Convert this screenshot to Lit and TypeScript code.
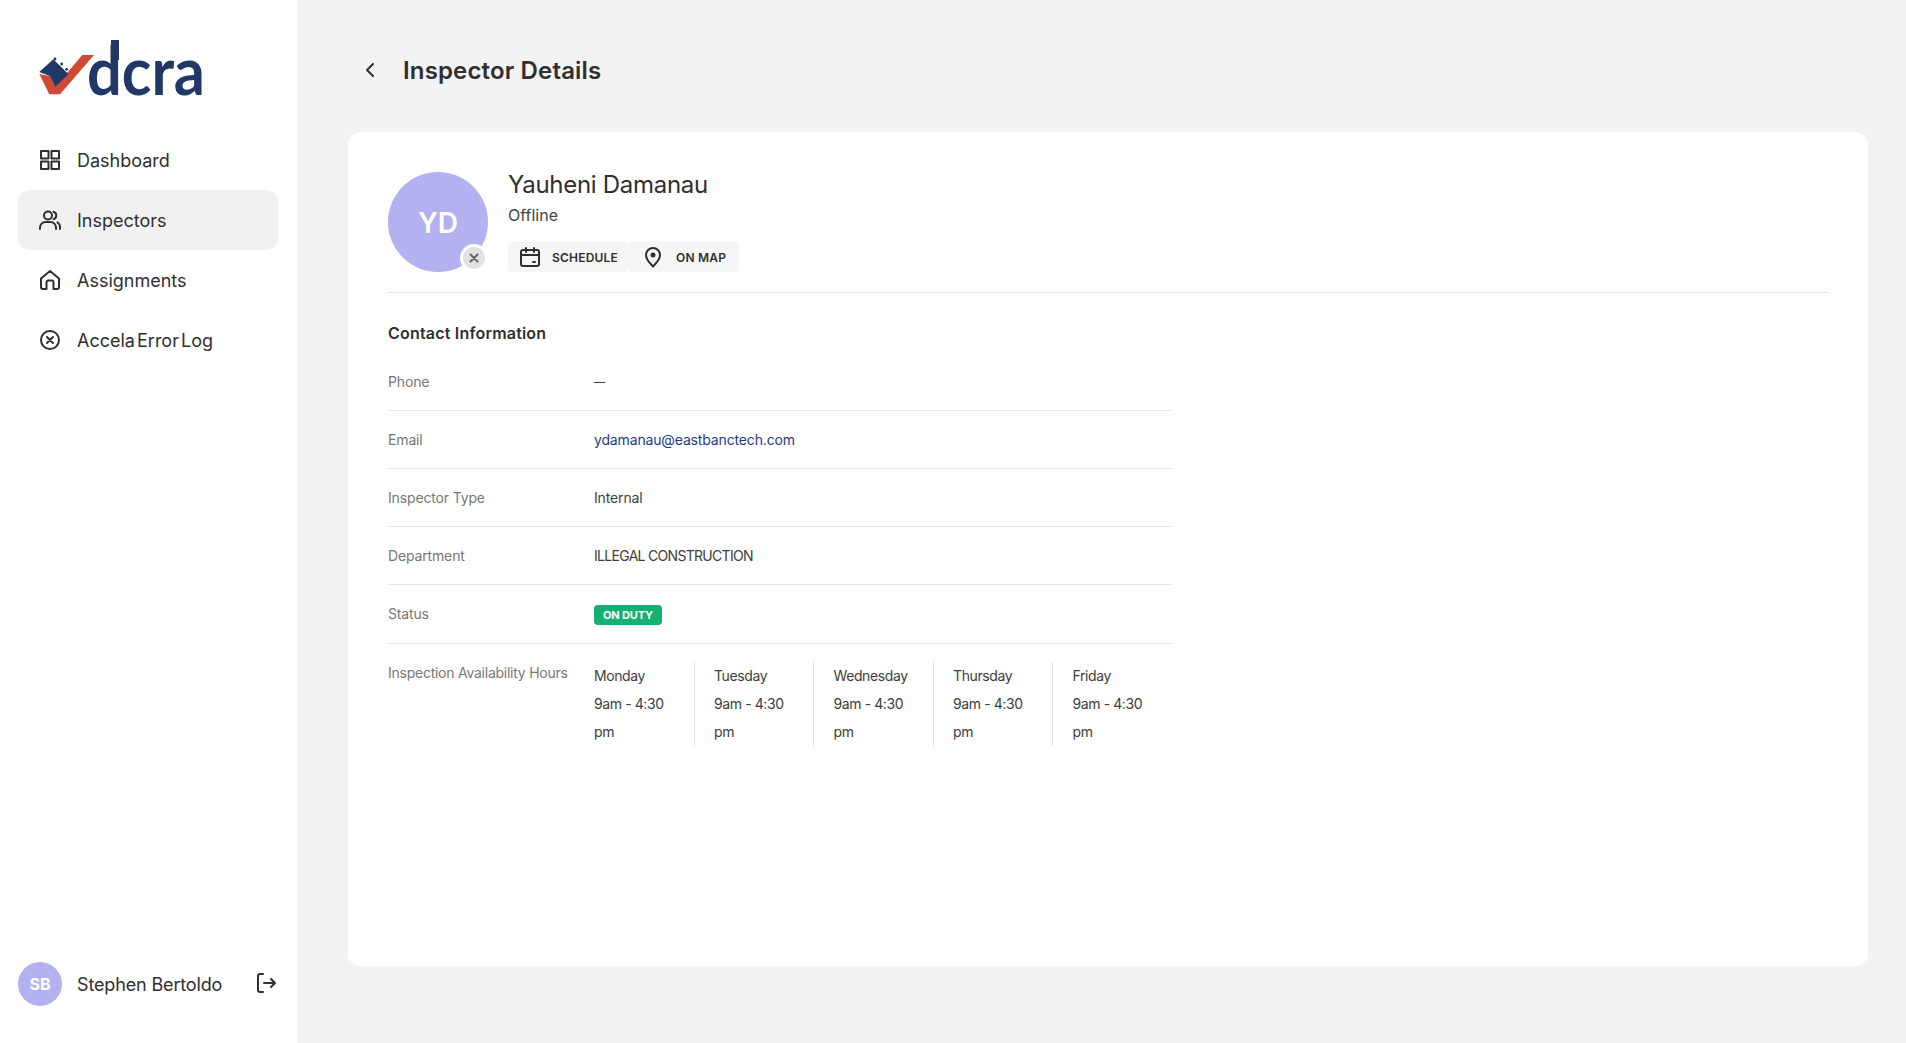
import { LitElement, html, css, svg } from 'lit';
import { customElement } from 'lit/decorators.js';

const icon = (body: unknown, size = 24, vb = 24) => html`<svg class="ic" width=${size} height=${size} viewBox="0 0 ${vb} ${vb}" fill="none" stroke="#2f2f2f" stroke-width="2" stroke-linecap="round" stroke-linejoin="round">${body}</svg>`;

const icons = {
  grid: svg`<rect x="3" y="3" width="7.5" height="7.5"/><rect x="13.5" y="3" width="7.5" height="7.5"/><rect x="3" y="13.5" width="7.5" height="7.5"/><rect x="13.5" y="13.5" width="7.5" height="7.5"/>`,
  users: svg`<circle cx="10" cy="7.5" r="4"/><path d="M2 21v-1.5A5.5 5.5 0 0 1 7.500 14h5a5.500 5.500 0 0 1 5.500 5.500V21"/><path d="M15.500 3.700a4 4 0 0 1 0 7.600"/><path d="M19.500 14.400A5.500 5.500 0 0 1 22 19v2"/>`,
  home: svg`<path d="M3 10.500 12 3l9 7.500V19a2 2 0 0 1-2 2h-3.500v-6.500a2 2 0 0 0-2-2h-3a2 2 0 0 0-2 2V21H5a2 2 0 0 1-2-2z"/>`,
  xcircle: svg`<circle cx="12" cy="12" r="9"/><path d="m9 9 6 6M15 9l-6 6"/>`,
  calendar: svg`<rect x="3" y="5" width="18" height="16" rx="2"/><path d="M8 3v4M16 3v4M3 10h18M15 17h2"/>`,
  pin: svg`<path d="M12 21.500c-1.500-1.600-7-6.500-7-11.500a7 7 0 0 1 14 0c0 5-5.500 9.900-7 11.500z"/><circle cx="12" cy="10" r="1.500" fill="#2f2f2f"/>`,
  logout: svg`<path d="M9 3H6a2 2 0 0 0-2 2v14a2 2 0 0 0 2 2h3"/><path d="M10 12h11M17 8l4 4-4 4"/>`,
  back: svg`<path d="m15 6-6 6 6 6"/>`,
};

const nav = [
  { label: 'Dashboard', icon: icons.grid },
  { label: 'Inspectors', icon: icons.users, active: true },
  { label: 'Assignments', icon: icons.home },
  { label: 'Accela Error Log', icon: icons.xcircle },
];

const days = ['Monday', 'Tuesday', 'Wednesday', 'Thursday', 'Friday'];

@customElement('app-root')
export class AppRoot extends LitElement {
  static styles = css`
    :host {
      display: block;
      font-family: Inter, "Noto Sans", sans-serif;
      color: #2f2f2f;
    }
    * { box-sizing: border-box; }
    .ic { display: block; flex: none; }

    .shell {
      display: grid;
      grid-template-columns: 298px 1fr;
      height: 1043px;
      background: #f3f3f3;
    }

    .side {
      background: #fff;
      display: flex;
      flex-direction: column;
      padding: 0 20px 37px 18px;
    }
    .logo { display: block; margin: 30px 0 0 7px; overflow: visible; }
    .logo text { font-family: Lato, sans-serif; font-size: 66px; font-weight: 700; fill: #213765; }
    .nav { display: flex; flex-direction: column; margin-top: 25px; }
    .nav-item {
      display: flex;
      align-items: center;
      gap: 15px;
      height: 60px;
      padding: 0 20px;
      border-radius: 12px;
      font-size: 18px;
      word-spacing: -3px;
    }
    .nav-item.active { background: #f1f1f1; }
    .user {
      margin-top: auto;
      display: flex;
      align-items: center;
      gap: 15px;
      font-size: 18px;
      letter-spacing: -0.15px;
    }
    .user .ic { margin-bottom: 3px; }
    .user-av {
      width: 44px;
      height: 44px;
      border-radius: 50%;
      background: #b4b1f1;
      color: #fff;
      font-weight: 700;
      font-size: 16px;
      display: flex;
      align-items: center;
      justify-content: center;
    }
    .user-name { flex: 1; }

    .main { padding: 0 38px 77px 50px; display: flex; flex-direction: column; }
    .head { height: 132px; flex: none; display: flex; align-items: center; gap: 21px; padding: 8px 0 0 10px; }
    .head h1 { margin: 0; font-size: 24px; font-weight: 600; letter-spacing: 0.15px; }

    .card { flex: 1; background: #fff; border-radius: 12px; padding: 40px; }
    .profile {
      display: flex;
      gap: 20px;
      padding-bottom: 20px;
      border-bottom: 1px solid #e4e4e4;
    }
    .avatar {
      position: relative;
      width: 100px;
      height: 100px;
      border-radius: 50%;
      background: #b4b1f1;
      color: #fff;
      font-size: 28px;
      font-weight: 600;
      padding-top: 2px;
      display: flex;
      align-items: center;
      justify-content: center;
    }
    .state {
      position: absolute;
      right: 0;
      bottom: 0;
      width: 28px;
      height: 28px;
      border-radius: 50%;
      background: #e1e1e1;
      border: 3px solid #fff;
      display: flex;
      align-items: center;
      justify-content: center;
    }
    .name { font-size: 24px; line-height: 26px; letter-spacing: -0.3px; }
    .offline { font-size: 16px; line-height: 20px; margin-top: 7px; color: #444; }
    .actions { display: flex; margin-top: 17px; }
    .action {
      display: flex;
      align-items: center;
      gap: 10px;
      height: 30px;
      padding: 0 10px;
      background: #f6f6f6;
      border-radius: 4px;
      font-size: 12px;
      font-weight: 600;
      letter-spacing: 0.2px;
    }
    .action + .action { gap: 11px; padding: 0 13px; }

    .section { margin: 30px 0 0; font-size: 16px; line-height: 20px; font-weight: 600; letter-spacing: 0.2px; }
    .rows { width: 784px; margin-top: 10px; color: #3d3d3d; }
    .row {
      display: grid;
      grid-template-columns: 206px 1fr;
      align-items: center;
      height: 58px;
      font-size: 14px;
      letter-spacing: -0.15px;
      border-bottom: 1px solid #e6e6e6;
    }
    .row.tall { height: 59px; }
    .row.tall .label { margin-bottom: 2px; }
    .label { color: #777; }
    .link { color: #1f3a8a; }
    .dash { font-size: 11px; }
    .caps { letter-spacing: -0.7px; }
    .badge {
      display: inline-block;
      background: #14b173;
      color: #fff;
      font-size: 11px;
      font-weight: 700;
      line-height: 20px;
      padding: 0 9px;
      border-radius: 4px;
      vertical-align: top;
      margin-top: 1px;
    }
    .hours {
      display: grid;
      grid-template-columns: 206px 1fr;
      padding-top: 18px;
      font-size: 14px;
      letter-spacing: -0.4px;
    }
    .hours .label { line-height: 22px; letter-spacing: -0.25px; }
    .days { display: flex; }
    .day { width: 119.500px; height: 84px; line-height: 28px; padding-right: 16px; }
    .day + .day { border-left: 1px solid #e0e0e0; padding-left: 19.500px; }
    .day:first-child { width: 99.500px; }
  `;

  render() {
    return html`
      <div class="shell">
        <aside class="side">
          <svg class="logo" width="190" height="75" viewBox="25 30 190 75">
            <path d="M39.300 74 49.300 94.300H60L94 55H82.300L55 87.300 50 76z" fill="#cf4a32"/>
            <path d="M39.300 72 53.300 59.300 68.300 74 55 87.300 50 76z" fill="#213765"/>
            <circle cx="55" cy="59" r="1.400" fill="#213765"/>
            <circle cx="61.700" cy="64" r="1.400" fill="#213765"/>
            <circle cx="66.700" cy="69.300" r="1.400" fill="#213765"/>
            <rect x="111" y="40" width="8" height="20" fill="#213765"/>
            <text x="87" y="95" textLength="118" lengthAdjust="spacingAndGlyphs">dcra</text>
          </svg>
          <nav class="nav">
            ${nav.map(n => html`
              <div class="nav-item ${n.active ? 'active' : ''}">${icon(n.icon)}<span>${n.label}</span></div>
            `)}
          </nav>
          <div class="user">
            <div class="user-av">SB</div>
            <div class="user-name">Stephen Bertoldo</div>
            ${icon(icons.logout)}
          </div>
        </aside>

        <main class="main">
          <div class="head">
            ${icon(icons.back, 24)}
            <h1>Inspector Details</h1>
          </div>
          <section class="card">
            <div class="profile">
              <div class="avatar">
                YD
                <div class="state">
                  <svg width="10" height="10" viewBox="0 0 10 10" fill="none" stroke="#666" stroke-width="2" stroke-linecap="round"><path d="m1.500 1.500 7 7M8.500 1.500l-7 7"/></svg>
                </div>
              </div>
              <div>
                <div class="name">Yauheni Damanau</div>
                <div class="offline">Offline</div>
                <div class="actions">
                  <div class="action">${icon(icons.calendar)}<span>SCHEDULE</span></div>
                  <div class="action">${icon(icons.pin)}<span>ON MAP</span></div>
                </div>
              </div>
            </div>

            <h2 class="section">Contact Information</h2>
            <div class="rows">
              <div class="row"><div class="label">Phone</div><div class="dash">—</div></div>
              <div class="row"><div class="label">Email</div><div class="link">ydamanau@eastbanctech.com</div></div>
              <div class="row"><div class="label">Inspector Type</div><div>Internal</div></div>
              <div class="row"><div class="label">Department</div><div class="caps">ILLEGAL CONSTRUCTION</div></div>
              <div class="row tall"><div class="label">Status</div><div><span class="badge">ON DUTY</span></div></div>
              <div class="hours">
                <div class="label">Inspection Availability Hours</div>
                <div class="days">
                  ${days.map(d => html`<div class="day">${d}<br />9am - 4:30 pm</div>`)}
                </div>
              </div>
            </div>
          </section>
        </main>
      </div>
    `;
  }
}
